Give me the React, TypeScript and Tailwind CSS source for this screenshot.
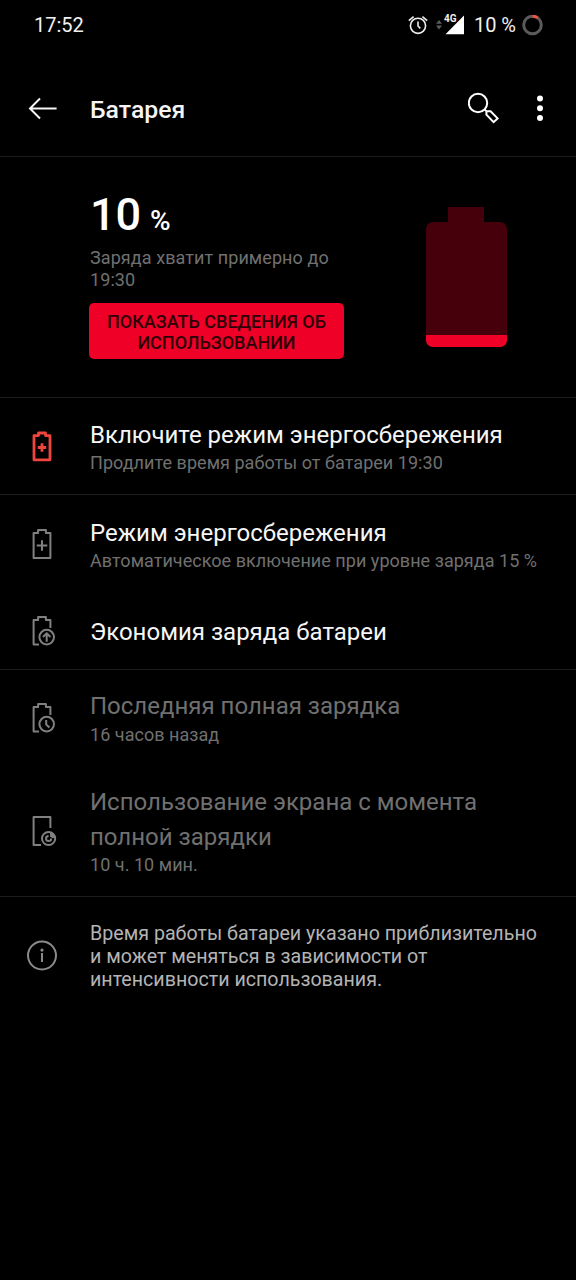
import type { ReactNode } from "react";
import { clsx } from "clsx";

const BATTERY_OPEN = "M24.4 13V4.9H19.9V2.1H12.1V4.9H7.6V29.6H13";

function StatusBar() {
  return (
    <div className="flex h-[50px] items-center justify-between pr-[33px] pl-[34px] text-[20px] text-[#f1f1f1]">
      <span>17:52</span>
      <div className="flex items-center">
        <svg width="20" height="20" viewBox="0 0 20 20" fill="none" stroke="#eee" strokeWidth="1.6">
          <circle cx="10" cy="10.8" r="7.6" />
          <path d="M10 6.5V11L12.3 13.4" />
          <path d="M0.8 5.6L5.6 1.6M14.4 1.6L19.2 5.6" />
        </svg>
        <div className="relative ml-[8px] h-5 w-[28px]">
          <svg width="28" height="20" viewBox="0 0 28 20">
            <path d="M0 8.8L3 5L6 8.8ZM0 10.6L3 14.4L6 10.6Z" fill="#5c5c5c" />
            <path d="M28 0.5V19.3H9.5Z" fill="#fff" />
          </svg>
          <span className="absolute top-0 left-[8px] h-[8px] bg-black text-[10px] leading-[8px] font-bold">
            4G
          </span>
        </div>
        <span className="ml-[10px]">10 %</span>
        <svg className="ml-[6px]" width="21" height="21" viewBox="0 0 21 21" fill="none" strokeWidth="3">
          <circle cx="10.5" cy="10" r="8.8" stroke="#5b5b5b" />
          <path d="M10.5 1.2A8.8 8.8 0 0 1 15.7 2.9" stroke="#f0513c" />
        </svg>
      </div>
    </div>
  );
}

function Header() {
  return (
    <header className="flex h-[107px] items-center border-b-[1.5px] border-[#1c1c1c] pt-[10px] pl-[28px]">
      <svg width="30" height="24" viewBox="0 0 30 24" fill="none" stroke="#f4f4f4" strokeWidth="2">
        <path d="M28.6 12.5H2M12 2.5L2 12.5L12 22.5" />
      </svg>
      <h1 className="ml-[32px] flex-1 pt-[3px] text-[24.8px] font-medium text-[#f4f4f4]">Батарея</h1>
      <svg width="32" height="32" viewBox="0 0 32 32" fill="none" stroke="#fff" strokeWidth="2">
        <circle cx="10" cy="11" r="9.2" />
        <path d="M16.5 17.5L18.6 19.2M18.4 19.2H22.6L29.6 26.4L25.6 30.2L18.4 22.6Z" />
      </svg>
      <svg className="mr-[32px] ml-[36px]" width="8" height="28" viewBox="0 0 8 28" fill="#fff">
        <circle cx="4" cy="4.5" r="3" />
        <circle cx="4" cy="14.3" r="3" />
        <circle cx="4" cy="24" r="3" />
      </svg>
    </header>
  );
}

function Hero() {
  return (
    <section className="flex h-[241px] justify-between border-b border-[#1c1c1c] pr-[69px] pl-[89px]">
      <div className="w-[256px] pt-[33px]">
        <p className="h-[50px] pl-px leading-[50px] font-medium text-white">
          <span className="text-[45px]">10</span>
          <span className="ml-[2px] text-[28px]"> %</span>
        </p>
        <p className="mt-[7px] pl-px text-[18px] leading-[21.5px] tracking-[0.08px] text-[#707070]">
          Заряда хватит примерно до 19:30
        </p>
        <button className="mt-[13px] h-[56px] w-[255px] rounded-[5px] bg-[#ee0027] px-3 pt-px text-[18px] leading-[21px] font-medium text-[#2d0007]">
          ПОКАЗАТЬ СВЕДЕНИЯ ОБ ИСПОЛЬЗОВАНИИ
        </button>
      </div>
      <div className="flex flex-col items-center pt-[50px]">
        <div className="mr-px h-[15px] w-[36px] bg-[#46000b]" />
        <div className="flex h-[125px] w-[81px] flex-col justify-end overflow-hidden rounded-[7px] bg-[#46000b]">
          <div className="h-[12.5px] bg-[#ee0027]" />
        </div>
      </div>
    </section>
  );
}

function Icon({ children, className = "stroke-[#808080] stroke-2" }: { children: ReactNode; className?: string }) {
  return (
    <svg
      className={clsx("ml-[26px] shrink-0", className)}
      width="32"
      height="32"
      viewBox="0 0 32 32"
      fill="none"
      strokeLinejoin="round"
    >
      {children}
    </svg>
  );
}

type RowProps = {
  icon: ReactNode;
  title: string;
  subtitle?: string;
  muted?: boolean;
  className: string;
};

function Row({ icon, title, subtitle, muted, className }: RowProps) {
  return (
    <div className={clsx("flex items-center", className)}>
      {icon}
      <div className={clsx("ml-[32px] w-[460px]", subtitle ? "pb-px" : "pt-[2px]")}>
        <p
          className={clsx(
            "text-[24px] leading-[34.5px]",
            muted ? "text-[#707070]" : "text-[#f6f6f6]",
          )}
        >
          {title}
        </p>
        {subtitle && (
          <p className="text-[18px] leading-[21px] tracking-[0.04px] text-[#707070]">{subtitle}</p>
        )}
      </div>
    </div>
  );
}

export default function App() {
  return (
    <div className="h-[1280px] w-[576px] overflow-hidden bg-black font-['Roboto',sans-serif]">
      <StatusBar />
      <Header />
      <Hero />

      <Row
        className="h-[97px] border-b border-[#1c1c1c]"
        title="Включите режим энергосбережения"
        subtitle="Продлите время работы от батареи 19:30"
        icon={
          <Icon className="stroke-[#f0443e] stroke-[2.8]">
            <path d="M8 5.6H12.5V3H19.5V5.6H24V29.8H8Z" />
            <path d="M16 13.3V21.7M11.8 17.5H20.2" />
          </Icon>
        }
      />
      <Row
        className="h-[98px]"
        title="Режим энергосбережения"
        subtitle="Автоматическое включение при уровне заряда 15 %"
        icon={
          <Icon>
            <path d="M7.6 4.9H12.1V2.1H19.9V4.9H24.4V30H7.6Z" />
            <path d="M16 12.2V22.8M10.7 17.5H21.3" />
          </Icon>
        }
      />
      <Row
        className="h-[77px] border-b border-[#1c1c1c]"
        title="Экономия заряда батареи"
        icon={
          <Icon>
            <path d={BATTERY_OPEN} />
            <circle cx="20.7" cy="22.1" r="7.3" />
            <path d="M20.7 26.8V18.4M17 22L20.7 18.3L24.4 22" />
          </Icon>
        }
      />
      <Row
        className="h-[95px]"
        muted
        title="Последняя полная зарядка"
        subtitle="16 часов назад"
        icon={
          <Icon>
            <path d={BATTERY_OPEN} />
            <circle cx="20.7" cy="22.1" r="7.3" />
            <path d="M20.2 18V22.4L23.4 25.4" />
          </Icon>
        }
      />
      <Row
        className="h-[132px] border-b border-[#1c1c1c]"
        muted
        title="Использование экрана с момента полной зарядки"
        subtitle="10 ч. 10 мин."
        icon={
          <Icon>
            <path d="M24.4 13V1.9H7.6V30H15" />
            <circle cx="22.6" cy="23.5" r="6.6" />
            <path d="M24 17.4V21.5L26 23H29.4A6.6 6.6 0 0 0 24 17.4Z" fill="#808080" stroke="none" />
            <path d="M22.6 20.9A2.6 2.6 0 1 0 25.2 23.5" />
          </Icon>
        }
      />

      <div className="flex items-center pt-[25px]">
        <Icon className="mb-[2px] stroke-[#8a8a8a] stroke-2">
          <circle cx="16" cy="15.5" r="14" />
          <path d="M16 13V22" />
          <circle cx="16" cy="10.1" r="1.6" fill="#8a8a8a" stroke="none" />
        </Icon>
        <p className="ml-[32px] w-[460px] text-[19.65px] leading-[23px] text-[#b4b4b4]">
          Время работы батареи указано приблизительно и может меняться в зависимости от интенсивности использования.
        </p>
      </div>
    </div>
  );
}
